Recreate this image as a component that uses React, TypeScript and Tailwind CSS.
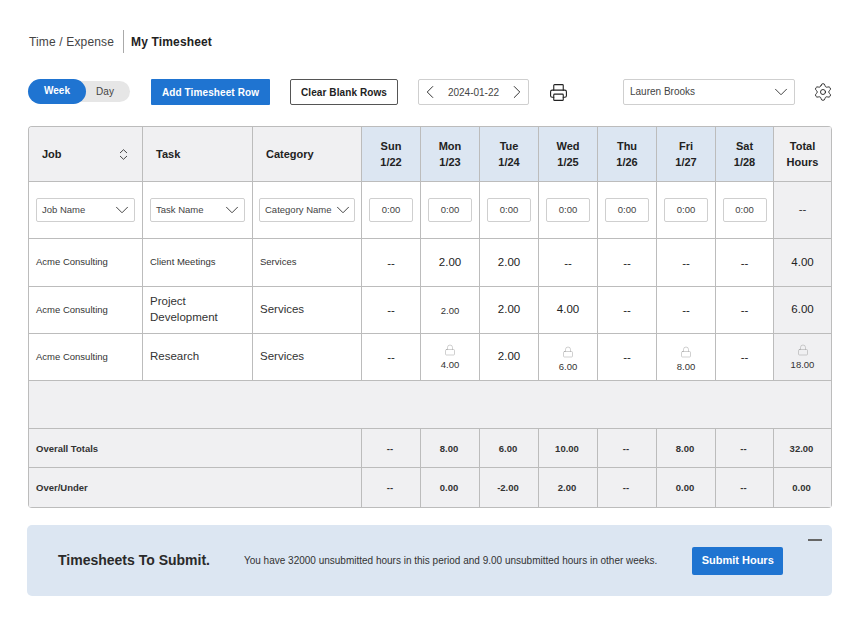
import React from 'react';
import { ChevronDown, ChevronLeft, ChevronRight, Lock, Printer, Settings } from 'lucide-react';

const DAYS = [
  ['Sun', '1/22'],
  ['Mon', '1/23'],
  ['Tue', '1/24'],
  ['Wed', '1/25'],
  ['Thu', '1/26'],
  ['Fri', '1/27'],
  ['Sat', '1/28'],
];

type Hours = string | { value: string; small?: boolean; locked?: boolean; low?: boolean };

const ROWS: { job: string; task: string; small?: boolean; hours: Hours[]; total: Hours; h: string }[] = [
  {
    job: 'Acme Consulting',
    task: 'Client Meetings',
    small: true,
    hours: ['--', '2.00', '2.00', '--', '--', '--', '--'],
    total: '4.00',
    h: 'h-[48px]',
  },
  {
    job: 'Acme Consulting',
    task: 'Project Development',
    hours: ['--', { value: '2.00', small: true }, '2.00', '4.00', '--', '--', '--'],
    total: '6.00',
    h: 'h-[47px]',
  },
  {
    job: 'Acme Consulting',
    task: 'Research',
    hours: [
      '--',
      { value: '4.00', small: true, locked: true },
      '2.00',
      { value: '6.00', small: true, locked: true, low: true },
      '--',
      { value: '8.00', small: true, locked: true, low: true },
      '--',
    ],
    total: { value: '18.00', small: true, locked: true },
    h: 'h-[47px]',
  },
];

const TOTALS = ['--', '8.00', '6.00', '10.00', '--', '8.00', '--', '32.00'];
const OVER = ['--', '0.00', '-2.00', '2.00', '--', '0.00', '--', '0.00'];

const cellBorder = 'border-r border-b border-[#bcbcbc]';

function Dropdown({ label }: { label: string }) {
  return (
    <div className="flex h-6 items-center justify-between rounded-[2px] border border-[#cfcfcf] bg-white pl-[5px] pr-px text-[9.5px] text-[#444]">
      <span className="whitespace-nowrap">{label}</span>
      <ChevronDown size={22} strokeWidth={1} className="shrink-0 text-[#333]" />
    </div>
  );
}

function HoursCell({ hours }: { hours: Hours }) {
  if (typeof hours === 'string') {
    return (
      <div className={`text-[11.5px] leading-[16px] text-[#222] ${hours === '--' ? '' : 'pb-[2px]'}`}>{hours}</div>
    );
  }
  return (
    <div className={`flex flex-col items-center ${hours.low ? 'pt-[4px]' : ''}`}>
      {hours.locked && <Lock size={12} strokeWidth={1} className="mb-[3px] text-[#a0a0a0]" />}
      <span className="text-[9.5px] leading-[11px] text-[#333]">{hours.value}</span>
    </div>
  );
}

function SortIcon() {
  return (
    <svg width="9" height="11" viewBox="0 0 9 11" fill="none" stroke="#333" strokeWidth="0.9" className="shrink-0">
      <path d="M1 4 L4.5 0.7 L8 4" />
      <path d="M1 7 L4.5 10.3 L8 7" />
    </svg>
  );
}

export default function App() {
  return (
    <div className="h-[634px] w-[855px] overflow-hidden bg-white pl-[28px] pr-[23px] pt-[30px] font-['Liberation_Sans',sans-serif]">
      {/* Title */}
      <div className="flex h-[23px] items-center pl-px text-[12px] tracking-[0.15px]">
        <span className="text-[#444]">Time / Expense</span>
        <span className="ml-[9px] h-[23px] w-px bg-[#aaa]" />
        <span className="ml-[7px] font-bold text-[#222]">My Timesheet</span>
      </div>

      {/* Toolbar */}
      <div className="mt-[26px] flex h-[26px] items-center">
        <div className="flex w-[102px] shrink-0 items-center text-[10px]">
          <span className="z-10 -mt-[2px] flex h-[25px] w-[58px] items-center justify-center rounded-full bg-[#1f74d1] pb-[2px] font-bold text-white">
            Week
          </span>
          <span className="-ml-[14px] -mt-px flex h-[21px] w-[58px] items-center justify-center rounded-r-full bg-[#e6e6e6] pb-px pl-[8px] text-[#444]">
            Day
          </span>
        </div>
        <button className="ml-[21px] h-[26px] w-[119px] shrink-0 rounded-[1px] bg-[#1f74d1] text-[10px] font-bold tracking-[0.1px] text-white">
          Add Timesheet Row
        </button>
        <button className="ml-[20px] h-[26px] w-[108px] shrink-0 rounded-[2px] border border-[#555] bg-white text-[10px] font-bold tracking-[0.1px] text-[#222]">
          Clear Blank Rows
        </button>
        <div className="ml-[20px] flex h-[26px] w-[111px] shrink-0 items-center justify-between rounded-[2px] border border-[#cfcfcf] text-[10px] text-[#444]">
          <ChevronLeft size={22} strokeWidth={1} className="text-[#222]" />
          <span>2024-01-22</span>
          <ChevronRight size={22} strokeWidth={1} className="text-[#222]" />
        </div>
        <Printer size={19} strokeWidth={1.4} className="ml-[20px] shrink-0 text-[#222]" />
        <div className="ml-[55px] flex h-[26px] w-[172px] shrink-0 items-center justify-between rounded-[2px] border border-[#cfcfcf] pb-px pl-[6px] pr-[2px] text-[10px] text-[#444]">
          <span>Lauren Brooks</span>
          <ChevronDown size={22} strokeWidth={1} className="text-[#333]" />
        </div>
        <Settings size={20} strokeWidth={1.1} className="ml-[18px] shrink-0 text-[#222]" />
      </div>

      {/* Table */}
      <div className="mt-[21px] w-[804px] overflow-hidden rounded-[4px] border-t border-l border-[#bcbcbc]">
        <table className="w-[803px] table-fixed border-separate border-spacing-0">
          <colgroup>
            <col className="w-[114px]" />
            <col className="w-[110px]" />
            <col className="w-[109px]" />
            <col className="w-[59px]" />
            <col className="w-[59px]" />
            <col className="w-[59px]" />
            <col className="w-[59px]" />
            <col className="w-[59px]" />
            <col className="w-[59px]" />
            <col className="w-[58px]" />
            <col className="w-[58px]" />
          </colgroup>
          <thead>
            <tr className="h-[55px] text-[11px] font-bold text-[#222]">
              <th className={`${cellBorder} bg-[#f0f0f2] pl-[13px] pr-[14px] text-left`}>
                <div className="flex items-center justify-between">
                  <span>Job</span>
                  <SortIcon />
                </div>
              </th>
              <th className={`${cellBorder} bg-[#f0f0f2] pl-[13px] text-left`}>Task</th>
              <th className={`${cellBorder} bg-[#f0f0f2] pl-[13px] text-left`}>Category</th>
              {DAYS.map(([day, date]) => (
                <th key={day} className={`${cellBorder} bg-[#dce6f2] leading-[16px]`}>
                  {day}
                  <br />
                  {date}
                </th>
              ))}
              <th className={`${cellBorder} bg-[#f0f0f2] leading-[16px]`}>
                Total
                <br />
                Hours
              </th>
            </tr>
          </thead>
          <tbody>
            <tr className="h-[57px]">
              <td className={`${cellBorder} px-[7px]`}>
                <Dropdown label="Job Name" />
              </td>
              <td className={`${cellBorder} px-[7px]`}>
                <Dropdown label="Task Name" />
              </td>
              <td className={`${cellBorder} px-[6px]`}>
                <Dropdown label="Category Name" />
              </td>
              {DAYS.map(([day]) => (
                <td key={day} className={`${cellBorder} text-center`}>
                  <div className="mx-auto flex h-6 w-11 items-center justify-center rounded-[2px] border border-[#cfcfcf] text-[9.5px] text-[#444]">
                    0:00
                  </div>
                </td>
              ))}
              <td className={`${cellBorder} bg-[#f0f0f2] text-center text-[11.5px] text-[#333]`}>--</td>
            </tr>
            {ROWS.map((row) => (
              <tr key={row.task} className={row.h}>
                <td className={`${cellBorder} pl-[7px] text-[9.5px] text-[#333]`}>{row.job}</td>
                <td className={`${cellBorder} pl-[7px] pr-2 text-[#333] ${row.small ? 'text-[9.5px]' : 'pb-[2px] text-[11.5px] leading-[16px]'}`}>
                  {row.task}
                </td>
                <td className={`${cellBorder} pl-[7px] text-[#333] ${row.small ? 'text-[9.5px]' : 'pb-[2px] text-[11.5px] leading-[16px]'}`}>
                  Services
                </td>
                {row.hours.map((h, i) => (
                  <td key={i} className={`${cellBorder} text-center`}>
                    <HoursCell hours={h} />
                  </td>
                ))}
                <td className={`${cellBorder} bg-[#f0f0f2] text-center`}>
                  <HoursCell hours={row.total} />
                </td>
              </tr>
            ))}
            <tr className="h-[48px]">
              <td colSpan={11} className={`${cellBorder} bg-[#f0f0f2]`} />
            </tr>
            <tr className="h-[39px] text-[9.5px] font-bold text-[#333]">
              <td colSpan={3} className={`${cellBorder} bg-[#f0f0f2] pl-[7px] pt-[2px]`}>
                Overall Totals
              </td>
              {TOTALS.map((v, i) => (
                <td key={i} className={`${cellBorder} bg-[#f0f0f2] pr-[2px] pt-[2px] text-center`}>
                  {v}
                </td>
              ))}
            </tr>
            <tr className="h-[40px] text-[9.5px] font-bold text-[#333]">
              <td colSpan={3} className={`${cellBorder} bg-[#f0f0f2] pl-[7px] pt-px`}>
                Over/Under
              </td>
              {OVER.map((v, i) => (
                <td key={i} className={`${cellBorder} bg-[#f0f0f2] pr-[2px] pt-px text-center`}>
                  {v}
                </td>
              ))}
            </tr>
          </tbody>
        </table>
      </div>

      {/* Submit banner */}
      <div className="relative -ml-px mt-[17px] flex h-[71px] w-[805px] items-center rounded-[5px] bg-[#dce6f2] pl-[31px]">
        <span className="text-[14px] font-bold text-[#2a2a2a]">Timesheets To Submit.</span>
        <span className="ml-[34px] text-[10px] text-[#333]">
          You have 32000 unsubmitted hours in this period and 9.00 unsubmitted hours in other weeks.
        </span>
        <button className="ml-[35px] h-7 w-[91px] rounded-[2px] bg-[#1f74d1] text-[11px] font-bold text-white">
          Submit Hours
        </button>
        <span className="absolute right-[10px] top-[14px] h-[2px] w-[14px] bg-[#666]" />
      </div>
    </div>
  );
}
